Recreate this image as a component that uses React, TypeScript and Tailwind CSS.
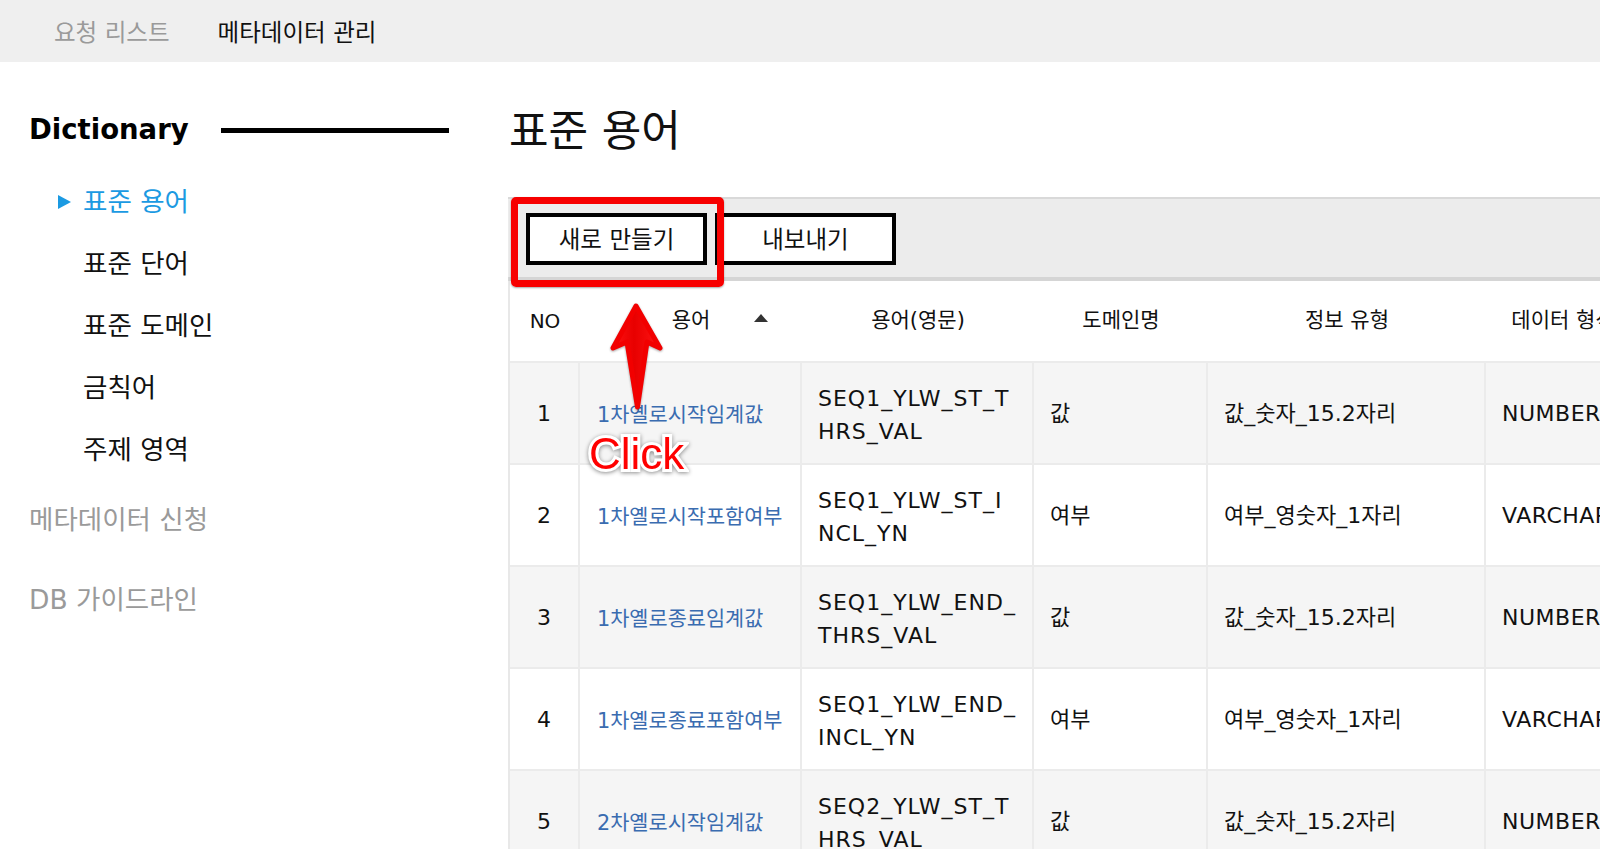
import React from "react";

type Row = {
  no: number;
  term: string;
  en: [string, string];
  domain: string;
  info: string;
  dtype: string;
};

const rows: Row[] = [
  { no: 1, term: "1차옐로시작임계값", en: ["SEQ1_YLW_ST_T", "HRS_VAL"], domain: "값", info: "값_숫자_15.2자리", dtype: "NUMBER(15,2)" },
  { no: 2, term: "1차옐로시작포함여부", en: ["SEQ1_YLW_ST_I", "NCL_YN"], domain: "여부", info: "여부_영숫자_1자리", dtype: "VARCHAR2(1)" },
  { no: 3, term: "1차옐로종료임계값", en: ["SEQ1_YLW_END_", "THRS_VAL"], domain: "값", info: "값_숫자_15.2자리", dtype: "NUMBER(15,2)" },
  { no: 4, term: "1차옐로종료포함여부", en: ["SEQ1_YLW_END_", "INCL_YN"], domain: "여부", info: "여부_영숫자_1자리", dtype: "VARCHAR2(1)" },
  { no: 5, term: "2차옐로시작임계값", en: ["SEQ2_YLW_ST_T", "HRS_VAL"], domain: "값", info: "값_숫자_15.2자리", dtype: "NUMBER(15,2)" },
];

const subItems = ["표준 단어", "표준 도메인", "금칙어", "주제 영역"];

export default function App() {
  return (
    <div className="relative w-full h-[849px] overflow-hidden bg-white text-[#111] font-['DejaVu_Sans','Noto_Sans_CJK_KR',sans-serif]">
      {/* Top nav */}
      <div className="h-[62px] bg-[#efefef] flex items-center pl-[54px] pt-[5px] gap-[48px] text-[23.5px]">
        <span className="text-[#9a9a9a]">요청 리스트</span>
        <span className="text-[#111]">메타데이터 관리</span>
      </div>

      <div className="flex">
        {/* Sidebar */}
        <aside className="w-[508px] shrink-0 pl-[29px] pt-[48px]">
          <div className="h-[40px] flex items-center">
            <span className="text-[27.5px] font-bold leading-none text-black">Dictionary</span>
            <div className="ml-[32px] w-[228px] h-[5px] bg-black" />
          </div>
          <div className="mt-[21px]">
            <div className="h-[62px] flex items-center pl-[29px] gap-[12px] text-[26.5px] text-[#1b9ae2]">
              <svg width="13" height="14" viewBox="0 0 13 14">
                <polygon points="0,0 13,7 0,14" fill="#1b9ae2" />
              </svg>
              <span>표준 용어</span>
            </div>
            {subItems.map((s) => (
              <div key={s} className="h-[62px] flex items-center pl-[54px] text-[26.5px] text-[#111]">
                {s}
              </div>
            ))}
          </div>
          <div className="mt-[8px] h-[62px] flex items-center text-[26.5px] text-[#9a9a9a]">메타데이터 신청</div>
          <div className="mt-[18px] h-[62px] flex items-center text-[26.5px] text-[#9a9a9a]">DB 가이드라인</div>
        </aside>

        {/* Main */}
        <main className="flex-1 min-w-0 pt-[39px]">
          <div className="h-[60px] flex items-center text-[43px] pl-[1px]">표준 용어</div>

          {/* Toolbar */}
          <div className="relative mt-[36px] w-[1200px] border-t-2 border-b-4 border-t-[#d9d9d9] border-b-[#d5d5d5] bg-[#ececec] pl-[18px] pt-[14px] pb-[12px] flex gap-[8px]">
            <button className="w-[181px] h-[52px] border-4 border-black bg-white text-[23.5px] pt-[3px] flex items-center justify-center">
              새로 만들기
            </button>
            <button className="w-[181px] h-[52px] border-4 border-black bg-white text-[23.5px] pt-[3px] flex items-center justify-center">
              내보내기
            </button>
            {/* red highlight annotation */}
            <div className="absolute left-[3px] top-[-2px] w-[213px] h-[90px] border-[7px] border-[#f70000] rounded-[5px] shadow-[0_1px_2px_rgba(0,0,0,0.35)]" />
          </div>

          {/* Table */}
          <div className="w-[1200px] border-l-2 border-[#e8e8e8]">
            {/* header */}
            <div className="flex h-[82px] border-b-2 border-[#ebebeb] bg-white text-[21px]">
              <div className="w-[70px] shrink-0 flex items-center justify-center text-[20px]">NO</div>
              <div className="relative w-[222px] shrink-0 flex items-center justify-center">
                용어
                <svg className="absolute left-[174px] top-[33px]" width="14" height="8" viewBox="0 0 14 8">
                  <polygon points="7,0 14,8 0,8" fill="#333" />
                </svg>
              </div>
              <div className="w-[232px] shrink-0 flex items-center justify-center">용어(영문)</div>
              <div className="w-[174px] shrink-0 flex items-center justify-center">도메인명</div>
              <div className="w-[278px] shrink-0 flex items-center justify-center">정보 유형</div>
              <div className="w-[154px] shrink-0 flex items-center justify-center whitespace-nowrap">데이터 형식</div>
            </div>
            {rows.map((r, i) => (
              <div
                key={r.no}
                className={`flex h-[102px] border-b-2 border-[#ebebeb] ${i % 2 === 0 ? "bg-[#f5f5f5]" : "bg-white"}`}
              >
                <div className="w-[70px] shrink-0 border-r-2 border-[#ebebeb] flex items-center justify-center text-[22px]">
                  {r.no}
                </div>
                <div className="w-[222px] shrink-0 border-r-2 border-[#ebebeb] flex items-center pl-[17px] pt-[5px] text-[20.8px] text-[#3a6cb0]">
                  {r.term}
                </div>
                <div className="w-[232px] shrink-0 border-r-2 border-[#ebebeb] flex flex-col justify-center pl-[16px] pt-[4px] text-[22px] tracking-[1px] leading-[33px]">
                  <span>{r.en[0]}</span>
                  <span>{r.en[1]}</span>
                </div>
                <div className="w-[174px] shrink-0 border-r-2 border-[#ebebeb] flex items-center pl-[16px] text-[22px]">
                  {r.domain}
                </div>
                <div className="w-[278px] shrink-0 border-r-2 border-[#ebebeb] flex items-center pl-[16px] text-[22px]">
                  {r.info}
                </div>
                <div className="w-[300px] shrink-0 flex items-center pl-[16px] text-[22px] tracking-[0.5px] whitespace-nowrap">
                  {r.dtype}
                </div>
              </div>
            ))}
          </div>
        </main>
      </div>

      {/* Arrow annotation */}
      <svg
        className="absolute left-[600px] top-[296px] drop-shadow-[0_1px_1px_rgba(0,0,0,0.35)]"
        width="70"
        height="120"
        viewBox="600 296 70 120"
      >
        <defs>
          <linearGradient id="ag" x1="0" x2="1" y1="0" y2="0">
            <stop offset="0" stopColor="#ff1010" />
            <stop offset="0.45" stopColor="#e80000" />
            <stop offset="1" stopColor="#ff1414" />
          </linearGradient>
        </defs>
        <polygon
          points="636,306 660,348 647,342 637.5,407 627,342 613,348"
          fill="url(#ag)"
          stroke="#f20000"
          strokeWidth="5"
          strokeLinejoin="round"
        />
      </svg>
      <div className="absolute left-[589px] top-[432px] text-[44px] leading-[44px] text-[#ff0000] font-['Liberation_Sans',sans-serif] [paint-order:stroke_fill] [-webkit-text-stroke:6px_white] drop-shadow-[0_1px_2px_rgba(0,0,0,0.45)]">
        Click
      </div>
    </div>
  );
}
